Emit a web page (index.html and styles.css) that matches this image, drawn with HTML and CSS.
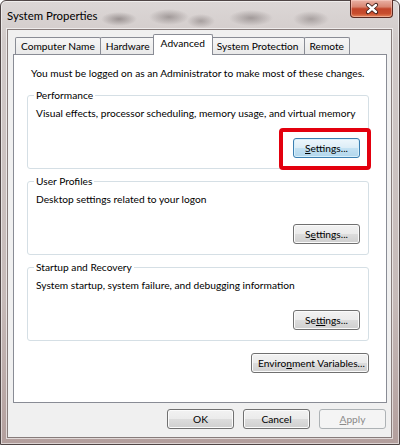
FILE: index.html
```html
<!DOCTYPE html>
<html lang="en">

<head>
    <meta charset="UTF-8">
    <title>System Properties</title>
    <link rel="stylesheet" href="styles.css">
</head>

<body>
    <div class="window">
        <div class="titlebar">
            <span class="title">System Properties</span>
            <button class="close-button" aria-label="Close">
                <svg viewBox="0 0 42 18" width="42" height="18">
                    <path d="M17 5 L25 12 M25 5 L17 12" stroke="#3a1c18" stroke-width="4.2" stroke-linecap="round" fill="none" />
                    <path d="M17 5 L25 12 M25 5 L17 12" stroke="#ffffff" stroke-width="2.4" stroke-linecap="round" fill="none" />
                </svg>
            </button>
        </div>

        <div class="client">
            <div class="tabs">
                <div class="tab">Computer Name</div>
                <div class="tab">Hardware</div>
                <div class="tab active">Advanced</div>
                <div class="tab">System Protection</div>
                <div class="tab">Remote</div>
            </div>

            <div class="tab-page">
                <p class="note">You must be logged on as an Administrator to make most of these changes.</p>

                <fieldset class="group">
                    <legend>Performance</legend>
                    <p>Visual effects, processor scheduling, memory usage, and virtual memory</p>
                    <div class="group-actions">
                        <span class="callout">
                            <button class="btn default"><u>S</u>ettings...</button>
                        </span>
                    </div>
                </fieldset>

                <fieldset class="group">
                    <legend>User Profiles</legend>
                    <p>Desktop settings related to your logon</p>
                    <div class="group-actions">
                        <button class="btn">S<u>e</u>ttings...</button>
                    </div>
                </fieldset>

                <fieldset class="group">
                    <legend>Startup and Recovery</legend>
                    <p>System startup, system failure, and debugging information</p>
                    <div class="group-actions">
                        <button class="btn">Se<u>t</u>tings...</button>
                    </div>
                </fieldset>

                <div class="page-actions">
                    <button class="btn wide">Enviro<u>n</u>ment Variables...</button>
                </div>
            </div>

            <div class="dialog-actions">
                <button class="btn">OK</button>
                <button class="btn">Cancel</button>
                <button class="btn" disabled><u>A</u>pply</button>
            </div>
        </div>
    </div>
</body>

</html>
```

FILE: styles.css
```css
* {
    box-sizing: border-box;
}

body {
    margin: 0;
    background: #ffffff;
    font-family: Lato, "Liberation Sans", sans-serif;
    font-size: 10.2px;
    color: #000000;
}

.window {
    width: 400px;
    height: 445px;
    display: flex;
    flex-direction: column;
    padding: 0 7px 6px 6px;
    border: 1px solid #4f4545;
    border-radius: 6px 6px 0 0;
    box-shadow: inset 0 0 0 1px rgba(255, 255, 255, 0.55);
    background:
        radial-gradient(ellipse 18px 7px at 118px 18px, rgba(80, 70, 70, 0.45), transparent),
        radial-gradient(ellipse 20px 8px at 168px 16px, rgba(80, 70, 70, 0.4), transparent),
        radial-gradient(ellipse 14px 7px at 200px 20px, rgba(80, 70, 70, 0.35), transparent),
        radial-gradient(ellipse 22px 8px at 250px 17px, rgba(80, 70, 70, 0.4), transparent),
        radial-gradient(ellipse 18px 8px at 310px 18px, rgba(80, 70, 70, 0.35), transparent),
        linear-gradient(180deg, #dcd7d6 0, #d1cac9 40px, #c6bab8 300px, #b39f9d 100%);
}

.titlebar {
    height: 28px;
    display: flex;
    align-items: center;
    justify-content: space-between;
}

.title {
    font-size: 11.4px;
    color: #000000;
}

.close-button {
    align-self: flex-start;
    width: 43px;
    height: 18px;
    margin: -1px -1px 0 0;
    padding: 0;
    border: 1px solid #5a2a22;
    border-top: none;
    border-radius: 0 0 4px 4px;
    background: linear-gradient(180deg, #eab2a5 0%, #d98672 40%, #c2452a 52%, #c84e2e 80%, #e6875c 100%);
    box-shadow: inset 0 0 0 1px rgba(255, 220, 210, 0.45);
}

.close-button svg {
    display: block;
}

.client {
    flex: 1;
    display: flex;
    flex-direction: column;
    padding: 4px 4px 8px 5px;
    background: #f0f0f0;
    border: 1px solid #877c7b;
    box-shadow: 0 0 0 1px rgba(255, 255, 255, 0.6);
}

/* tab strip */
.tabs {
    display: flex;
    align-items: flex-end;
    height: 21px;
    margin-bottom: -1px;
    padding-left: 2px;
    position: relative;
    z-index: 1;
}

.tab {
    height: 17px;
    margin: 0 -1px 1px 0;
    padding: 0 5px;
    line-height: 16px;
    border: 1px solid #898c95;
    border-bottom: none;
    border-radius: 2px 2px 0 0;
    background: linear-gradient(180deg, #f6f6f6, #e9e9e9);
    white-space: nowrap;
}

.tab.active {
    height: 21px;
    margin: 0 -2px 0 -2px;
    padding: 0 7px;
    line-height: 17px;
    background: #ffffff;
    position: relative;
    z-index: 1;
}

.tab-page {
    flex: 1;
    padding: 11px 17px 0 13px;
    background: #ffffff;
    border: 1px solid #898c95;
}

.note {
    margin: 0 0 0 4px;
    line-height: 14px;
    white-space: nowrap;
}

.group {
    margin: 5px 0 0;
    padding: 4px 8px 10px 8px;
    min-width: 0;
    border: 1px solid #d5dfe5;
    border-radius: 3px;
}

.note + .group {
    margin-top: 8px;
}

.group legend {
    padding: 0 2px;
    margin-left: -2px;
    line-height: 14px;
}

.group p {
    margin: 0;
    line-height: 14px;
    white-space: nowrap;
}

.group-actions {
    display: flex;
    justify-content: flex-end;
    margin-top: 18px;
}

.callout {
    position: relative;
    display: inline-block;
}

.callout::after {
    content: "";
    position: absolute;
    top: -10px;
    right: -11px;
    bottom: -12px;
    left: -14px;
    border: 4px solid #e3000e;
    border-radius: 4px;
}

.page-actions {
    display: flex;
    justify-content: flex-end;
    margin-top: 12px;
}

/* buttons */
.btn {
    display: block;
    height: 20px;
    min-width: 67px;
    padding: 0 6px;
    font-family: inherit;
    font-size: 10.2px;
    color: #000000;
    white-space: nowrap;
    border: 1px solid #707070;
    border-radius: 3px;
    background: linear-gradient(180deg, #f2f2f2 0%, #ebebeb 50%, #dddddd 50%, #cfcfcf 100%);
    box-shadow: inset 0 0 0 1px #fbfbfb;
}

.btn.default {
    border-color: #3c7fb1;
    background: linear-gradient(180deg, #eef7fc 0%, #dcedf7 50%, #c4e2f3 50%, #b2d6ec 100%);
    box-shadow: inset 0 0 0 1px #d8f0fb;
}

.btn.wide {
    width: 118px;
}

.btn:disabled {
    color: #8a8a8a;
    border-color: #adb2b5;
    background: #f4f4f4;
    box-shadow: none;
}

.dialog-actions {
    display: flex;
    justify-content: flex-end;
    gap: 9px;
    margin-top: 6px;
    padding-right: 1px;
}
```
